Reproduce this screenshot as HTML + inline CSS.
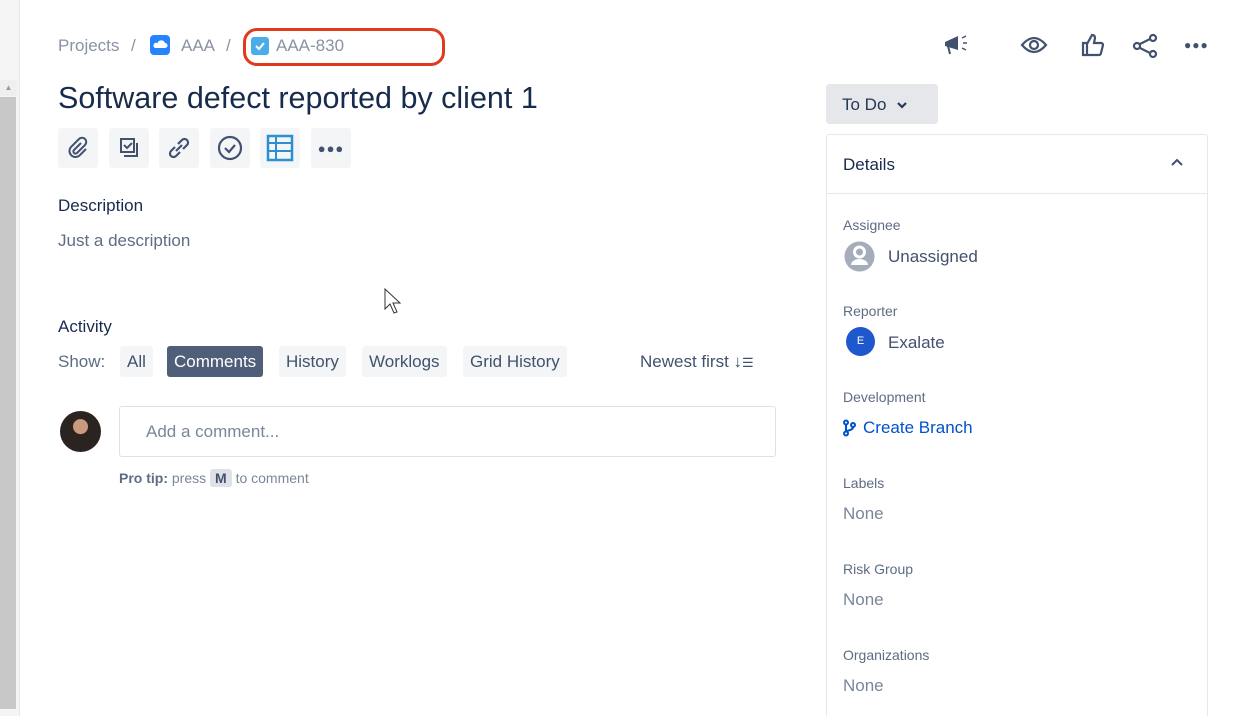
<!DOCTYPE html>
<html><head><meta charset="utf-8"><style>
*{box-sizing:border-box;margin:0;padding:0}
html,body{width:1234px;height:716px;overflow:hidden}
body{background:#fff;font-family:"Liberation Sans",sans-serif;color:#172b4d;position:relative}
.a{position:absolute}
.btn{position:absolute;top:128px;width:40px;height:40px;background:#f4f5f7;border-radius:3px;display:flex;align-items:center;justify-content:center}
.tab{position:absolute;top:346px;height:31px;background:#f4f5f7;border-radius:3px;font-size:17px;color:#42526e;line-height:31px;padding:0 7px}
.lbl{position:absolute;left:843px;font-size:14px;color:#5e6c84}
.val{position:absolute;left:843px;font-size:17px;color:#7a869a}
</style></head><body>
<div class="a" style="left:0;top:0;width:20px;height:716px;background:#f5f5f5;border-right:1px solid #e8e8e8"></div>
<div class="a" style="left:0;top:80px;width:17px;height:16px;background:#efefef;color:#999;font-size:8px;text-align:center;line-height:16px">▲</div>
<div class="a" style="left:0;top:97px;width:16px;height:612px;background:#c8c8c8"></div>

<div class="a" style="left:58px;top:36px;font-size:17px;color:#8993a4">Projects</div>
<div class="a" style="left:131px;top:36px;font-size:17px;color:#8993a4">/</div>
<div class="a" style="left:150px;top:35px;width:20px;height:20px;background:#2684ff;border-radius:4px"><svg width="20" height="20"><path d="M5 13h10a2.5 2.5 0 0 0 0-5 4 4 0 0 0-7.5 0A2.5 2.5 0 0 0 5 13z" fill="#fff"/></svg></div>
<div class="a" style="left:181px;top:36px;font-size:17px;color:#8993a4">AAA</div>
<div class="a" style="left:226px;top:36px;font-size:17px;color:#8993a4">/</div>
<div class="a" style="left:251px;top:37px;width:18px;height:18px;background:#4bade8;border-radius:3px"><svg width="18" height="18"><path d="M5 9l3 3 5-6" stroke="#fff" stroke-width="2" fill="none"/></svg></div>
<div class="a" style="left:276px;top:36px;font-size:17px;color:#8993a4">AAA-830</div>
<div class="a" style="left:243px;top:28px;width:202px;height:38px;border:3px solid #e03a1e;border-radius:14px"></div>

<div class="a" style="left:58px;top:81px;font-size:30.5px;color:#172b4d">Software defect reported by client 1</div>

<div class="btn" style="left:58px"><svg width="24" height="24" fill="none" stroke="#42526e" stroke-width="2"><path d="M15 7l-7 7a2 2 0 0 0 3 3l8-8a4 4 0 0 0-6-6l-8 8a6 6 0 0 0 9 8l6-6"/></svg></div>
<div class="btn" style="left:109px"><svg width="24" height="24" fill="none" stroke="#42526e" stroke-width="2"><rect x="4" y="3" width="13" height="13"/><path d="M7 9l3 3 5-5M20 7v13H7"/></svg></div>
<div class="btn" style="left:159px"><svg width="28" height="28" fill="none" stroke="#42526e" stroke-width="2.2"><path d="M11 17l6-6M10 13l-4 4a3.5 3.5 0 0 0 5 5l4-4M18 15l4-4a3.5 3.5 0 0 0-5-5l-4 4"/></svg></div>
<div class="btn" style="left:210px"><svg width="28" height="28" fill="none" stroke="#42526e" stroke-width="2.2"><circle cx="14" cy="14" r="11"/><path d="M9 14l4 4 6-7"/></svg></div>
<div class="btn" style="left:260px"><svg width="30" height="30" fill="none" stroke="#2d8fd0" stroke-width="2.5"><rect x="3" y="3" width="24" height="24"/><path d="M3 10h24M3 18h24M11 3v24" stroke-width="2"/></svg></div>
<div class="btn" style="left:311px;font-size:13px;color:#42526e;letter-spacing:1px">●●●</div>

<div class="a" style="left:58px;top:196px;font-size:17px;color:#172b4d">Description</div>
<div class="a" style="left:58px;top:231px;font-size:17px;color:#5e6c84">Just a description</div>
<div class="a" style="left:58px;top:317px;font-size:17px;color:#172b4d">Activity</div>
<div class="a" style="left:58px;top:352px;font-size:17px;color:#5e6c84">Show:</div>
<div class="tab" style="left:120px">All</div>
<div class="tab" style="left:167px;background:#505f79;color:#fff">Comments</div>
<div class="tab" style="left:279px">History</div>
<div class="tab" style="left:362px">Worklogs</div>
<div class="tab" style="left:463px">Grid History</div>
<div class="a" style="left:640px;top:352px;font-size:17px;color:#42526e">Newest first ↓<span style="font-size:13px">☰</span></div>
<div class="a" style="left:60px;top:411px;width:41px;height:41px;border-radius:50%;background:radial-gradient(circle at 50% 38%,#c99a7d 0 22%,#2b2320 24% 100%)"></div>
<div class="a" style="left:119px;top:406px;width:657px;height:51px;border:1px solid #dfe1e6;border-radius:3px;font-size:17px;color:#7a869a;padding:15px 26px">Add a comment...</div>
<div class="a" style="left:119px;top:470px;font-size:14px;color:#7a869a"><b style="color:#5e6c84">Pro tip:</b> press <span style="background:#dfe1e6;padding:1px 5px;border-radius:3px;color:#42526e;font-weight:bold">M</span> to comment</div>

<svg class="a" style="left:942px;top:32px" width="30" height="26"><path d="M3 10l13-6v14L3 14z" fill="#42526e"/><path d="M6 14l2 8" stroke="#42526e" stroke-width="2"/><path d="M20 6l4-2M21 11h4M20 16l4 2" stroke="#42526e" stroke-width="1.5"/></svg>
<svg class="a" style="left:1020px;top:33px" width="28" height="24" fill="none" stroke="#42526e" stroke-width="2.2"><path d="M2 12q12-14 24 0q-12 14-24 0z"/><circle cx="14" cy="12" r="4"/></svg>
<svg class="a" style="left:1080px;top:32px" width="26" height="26" fill="none" stroke="#42526e" stroke-width="2.2"><path d="M3 11h4v12H3zM7 12l5-9c2 0 3 1 3 3l-1 5h7a2 2 0 0 1 2 2l-2 8a2 2 0 0 1-2 2H7"/></svg>
<svg class="a" style="left:1132px;top:33px" width="28" height="26" fill="none" stroke="#42526e" stroke-width="2.2"><circle cx="5" cy="13" r="3"/><circle cx="21" cy="5" r="3"/><circle cx="21" cy="21" r="3"/><path d="M8 11l10-5M8 15l10 5"/></svg>
<div class="a" style="left:1184px;top:38px;font-size:12px;color:#42526e;letter-spacing:1px">●●●</div>

<div class="a" style="left:826px;top:84px;width:112px;height:40px;background:#e5e7eb;border-radius:3px;font-size:17px;color:#253858;padding:11px 16px">To Do<svg style="margin-left:10px" width="12" height="10"><path d="M2 3l4 4 4-4" stroke="#253858" stroke-width="2.2" fill="none"/></svg></div>
<div class="a" style="left:826px;top:134px;width:382px;height:590px;border:1px solid #e6e8eb;border-radius:3px"></div>
<div class="a" style="left:826px;top:193px;width:382px;height:1px;background:#e6e8eb"></div>
<div class="a" style="left:843px;top:155px;font-size:17px;color:#172b4d">Details</div>
<svg class="a" style="left:1170px;top:157px" width="14" height="12"><path d="M2 8l5-5 5 5" stroke="#42526e" stroke-width="2" fill="none"/></svg>

<div class="lbl" style="top:217px">Assignee</div>
<svg class="a" style="left:843px;top:240px" width="33" height="33"><circle cx="16.5" cy="16.5" r="15" fill="#a5adba"/><circle cx="16.5" cy="12" r="5" fill="none" stroke="#fff" stroke-width="3"/><path d="M8 25a8.5 6 0 0 1 17 0z" fill="#fff"/></svg>
<div class="a" style="left:888px;top:247px;font-size:17px;color:#42526e">Unassigned</div>
<div class="lbl" style="top:303px">Reporter</div>
<div class="a" style="left:846px;top:327px;width:29px;height:29px;border-radius:50%;background:#1f58cc;color:#fff;font-size:11px;text-align:center;line-height:29px">E</div>
<div class="a" style="left:888px;top:333px;font-size:17px;color:#42526e">Exalate</div>
<div class="lbl" style="top:389px">Development</div>
<svg class="a" style="left:842px;top:419px" width="14" height="18" fill="none" stroke="#0052cc" stroke-width="2"><circle cx="4" cy="3.5" r="2"/><circle cx="4" cy="14.5" r="2"/><circle cx="11" cy="6" r="2"/><path d="M4 5.5v7M11 8c0 4-7 3-7 5"/></svg>
<div class="a" style="left:863px;top:418px;font-size:17px;color:#0052cc">Create Branch</div>
<div class="lbl" style="top:475px">Labels</div>
<div class="val" style="top:504px">None</div>
<div class="lbl" style="top:561px">Risk Group</div>
<div class="val" style="top:590px">None</div>
<div class="lbl" style="top:647px">Organizations</div>
<div class="val" style="top:676px">None</div>

<svg class="a" style="left:384px;top:288px" width="20" height="36"><path d="M1 1v20l5-5 4 9 3-1-4-9h7z" fill="#fff" stroke="#333" stroke-width="1"/></svg>
</body></html>
